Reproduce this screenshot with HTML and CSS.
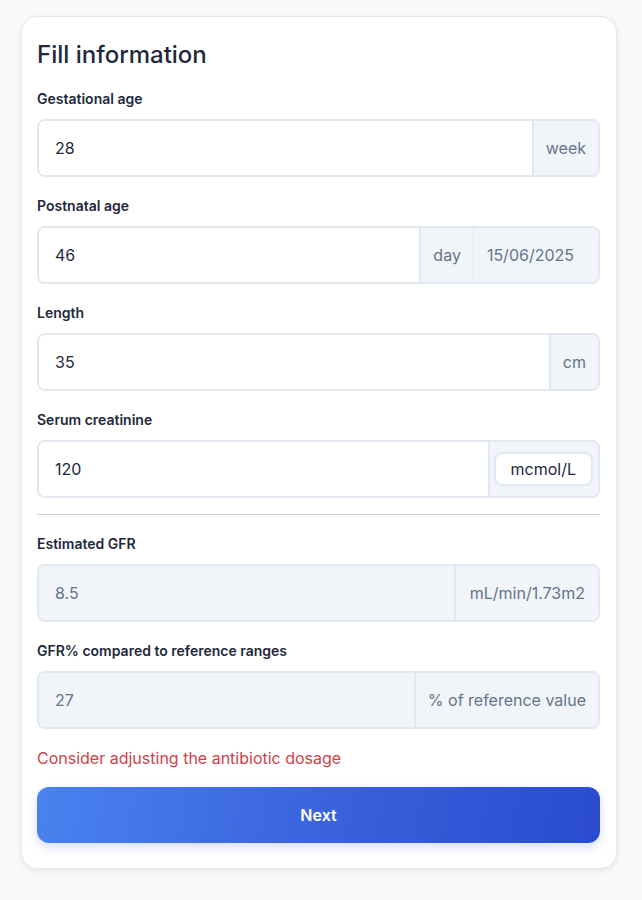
FILE: index.html
```html
<!DOCTYPE html>
<html lang="en">
<head>
<meta charset="utf-8">
<title>Fill information</title>
<link rel="stylesheet" href="styles.css">
</head>
<body>
<main class="card">
  <h1 class="title">Fill information</h1>

  <div class="field">
    <label class="label" for="ga">Gestational age</label>
    <div class="group">
      <input class="control" id="ga" type="text" value="28">
      <span class="addon">week</span>
    </div>
  </div>

  <div class="field">
    <label class="label" for="pna">Postnatal age</label>
    <div class="group">
      <input class="control" id="pna" type="text" value="46">
      <span class="addon">day</span>
      <span class="addon addon-date">15/06/2025</span>
    </div>
  </div>

  <div class="field">
    <label class="label" for="len">Length</label>
    <div class="group">
      <input class="control" id="len" type="text" value="35">
      <span class="addon">cm</span>
    </div>
  </div>

  <div class="field">
    <label class="label" for="scr">Serum creatinine</label>
    <div class="group">
      <input class="control" id="scr" type="text" value="120">
      <span class="addon addon-select"><span class="unit-select">mcmol/L</span></span>
    </div>
  </div>

  <hr class="divider">

  <div class="field">
    <label class="label" for="gfr">Estimated GFR</label>
    <div class="group">
      <input class="control control-readonly" id="gfr" type="text" value="8.5" readonly>
      <span class="addon addon-wide">mL/min/1.73m2</span>
    </div>
  </div>

  <div class="field">
    <label class="label" for="pct">GFR% compared to reference ranges</label>
    <div class="group">
      <input class="control control-readonly" id="pct" type="text" value="27" readonly>
      <span class="addon">% of reference value</span>
    </div>
  </div>

  <p class="warning">Consider adjusting the antibiotic dosage</p>

  <button class="btn-next" type="button">Next</button>
</main>
</body>
</html>
```

FILE: styles.css
```css
* {
  box-sizing: border-box;
}

html, body {
  margin: 0;
  background: #f8f9fb;
}

body {
  font-family: Inter, "Noto Sans", sans-serif;
  color: #1e293b;
  padding: 16px 25px 30px 21px;
}

.card {
  background: #ffffff;
  border: 1px solid #e5e8ee;
  border-radius: 16px;
  box-shadow: 0 2px 6px rgba(15, 23, 42, 0.08);
  padding: 17px 16px 25px 15px;
}

.title {
  margin: 5px 0 18px;
  font-size: 24px;
  line-height: 32px;
  font-weight: 500;
  color: #1e293b;
}

.field {
  margin-bottom: 19px;
}

.label {
  display: block;
  font-size: 14px;
  line-height: 20px;
  font-weight: 600;
  color: #1e293b;
  margin-bottom: 10px;
}

.group {
  display: flex;
  height: 58px;
  border: 2px solid #e2e8f0;
  border-radius: 8px;
  overflow: hidden;
}

.control {
  flex: 1;
  min-width: 0;
  border: 0;
  outline: none;
  padding: 0 16px;
  font: 400 16px Inter, "Noto Sans", sans-serif;
  color: #1e293b;
  background: #ffffff;
}

.control-readonly {
  background: #f1f4f9;
  color: #64748b;
}

.addon {
  display: flex;
  align-items: center;
  padding: 0 12px;
  background: #f1f4f9;
  border-left: 2px solid #e2e8f0;
  font-size: 16px;
  color: #64748b;
  white-space: nowrap;
}

.addon-wide {
  padding: 0 13px 0 14px;
}

.addon-date {
  border-left: 1px solid #e2e8f0;
  padding: 0 24px 0 13px;
}

.addon-select {
  padding: 0 5px 0 4px;
}

.unit-select {
  display: flex;
  align-items: center;
  height: 34px;
  padding: 0 15px;
  background: #ffffff;
  border: 2px solid #e2e8f0;
  border-radius: 8px;
  color: #1e293b;
  font-size: 16px;
}

.divider {
  border: 0;
  border-top: 1px solid #cbd0d6;
  margin: -3px 0 19px;
}

.warning {
  margin: -2px 0 17px;
  font-size: 16px;
  line-height: 24px;
  color: #d0424a;
}

.btn-next {
  display: block;
  width: 100%;
  height: 56px;
  border: 0;
  border-radius: 12px;
  background: linear-gradient(100deg, #4a82ef 0%, #3a63dd 50%, #2a4bcf 100%);
  color: #ffffff;
  font: 600 16px Inter, "Noto Sans", sans-serif;
  box-shadow: 0 4px 10px rgba(37, 72, 200, 0.18);
  cursor: pointer;
}
```
